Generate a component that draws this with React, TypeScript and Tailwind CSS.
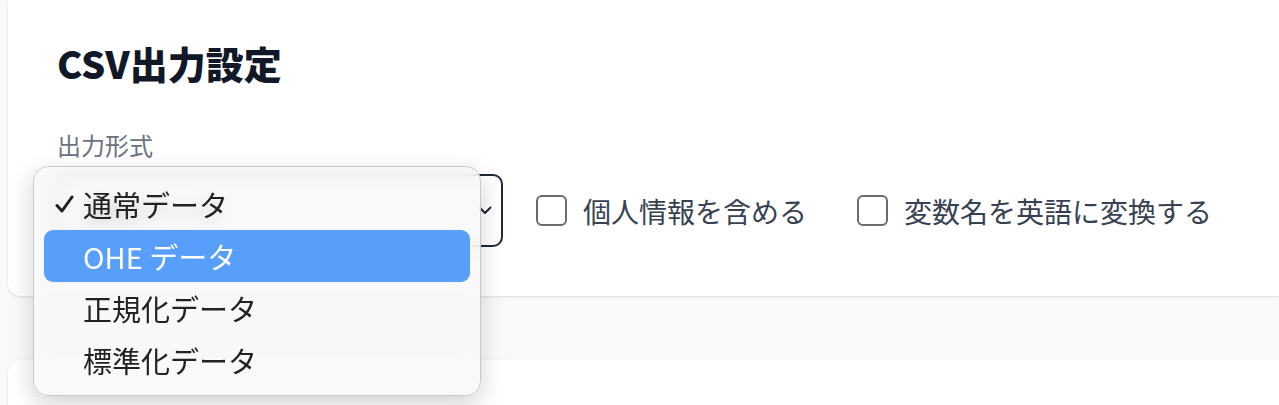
import React from "react";

const options = ["通常データ", "OHE データ", "正規化データ", "標準化データ"];

const CheckMark = () => (
  <svg width="19" height="18" viewBox="0 0 19 18" fill="none">
    <path d="M2 10.5 L7 16 L17 2" stroke="#1f1f1f" strokeWidth="3" strokeLinecap="round" strokeLinejoin="round" />
  </svg>
);

const Chevron = () => (
  <svg width="14" height="9" viewBox="0 0 14 9" fill="none">
    <path d="M1.5 1.5 L7 7 L12.5 1.5" stroke="#1f2937" strokeWidth="2" strokeLinecap="round" strokeLinejoin="round" />
  </svg>
);

const Checkbox = ({ label }: { label: string }) => (
  <label className="flex items-center gap-4">
    <span className="block w-[31px] h-[31px] rounded-[6px] border-2 border-[#6b6b6b] bg-white" />
    <span className="text-[28px] leading-[36px] text-[#374151]">{label}</span>
  </label>
);

const App = () => {
  return (
    <div
      className="relative h-[405px] overflow-hidden bg-[#f9fafb] pl-2"
      style={{ fontFamily: '"Noto Sans CJK JP", "Noto Sans", sans-serif' }}
    >
      {/* settings card */}
      <div className="bg-white rounded-bl-xl shadow-sm pl-[49px] pt-[41px] pb-[49px]">
        <h2 className="text-[38px] leading-[44px] font-extrabold text-[#111827]">CSV出力設定</h2>
        <p className="mt-[46px] text-[24px] leading-[28px] text-[#6b7280]">出力形式</p>
        <div className="mt-[15px] flex items-center">
          <div className="w-[446px] h-[73px] rounded-[10px] border-2 border-[#1f2937] flex items-center justify-between pl-6 pr-[9px]">
            <span className="text-[28px] text-[#111827]">通常データ</span>
            <Chevron />
          </div>
          <div className="ml-[33px] flex items-center gap-[50px]">
            <Checkbox label="個人情報を含める" />
            <Checkbox label="変数名を英語に変換する" />
          </div>
        </div>
      </div>

      {/* next card */}
      <div className="mt-16 h-40 bg-white rounded-tl-xl shadow-sm" />

      {/* native select popup */}
      <div className="absolute left-[33px] top-[166px] w-[448px] rounded-[15px] border border-[#c9c9c9] bg-[#f7f7f7]/80 backdrop-blur-sm shadow-[0_8px_24px_rgba(0,0,0,0.18)] pt-[11px] pb-[9px] px-[10px]">
        {options.map((o, i) => (
          <div
            key={o}
            className={
              i === 1
                ? "h-[52px] rounded-[9px] bg-[#579ffb] text-white flex items-center"
                : "h-[52px] rounded-[9px] text-[#222222] flex items-center"
            }
          >
            <span className="w-[39px] flex justify-end pr-[9px]">{i === 0 ? <CheckMark /> : null}</span>
            <span className="text-[29px] leading-none">{o}</span>
          </div>
        ))}
      </div>
    </div>
  );
};

export default App;
